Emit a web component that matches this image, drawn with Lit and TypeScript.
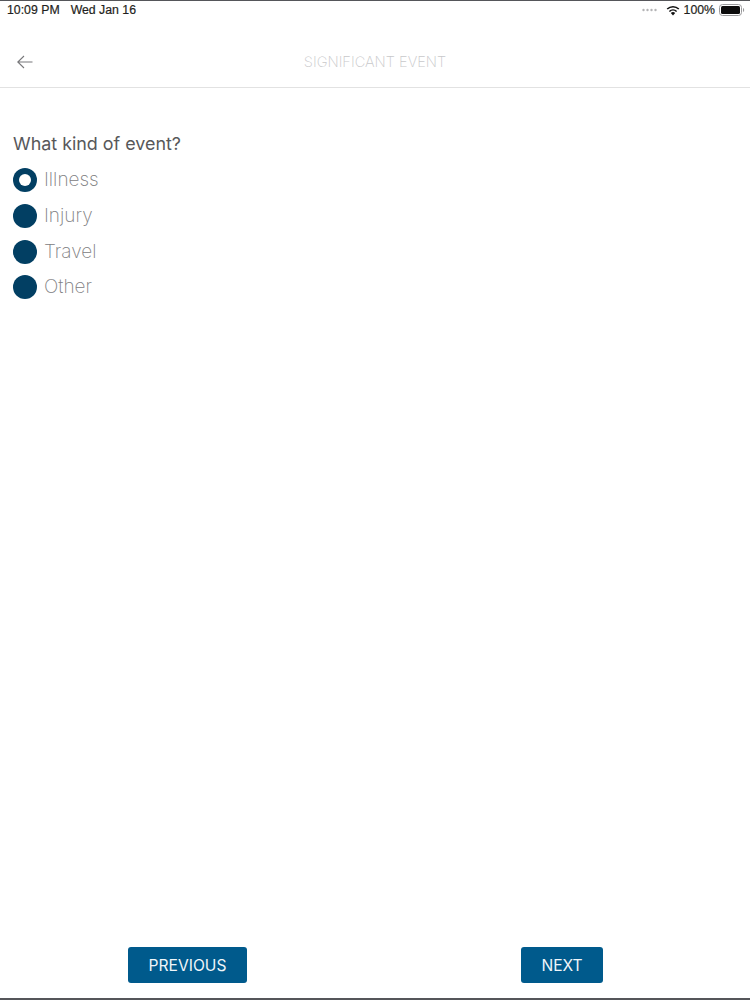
import { LitElement, html, css } from "lit";
import { customElement } from "lit/decorators.js";

const OPTIONS = ["Illness", "Injury", "Travel", "Other"];

@customElement("app-root")
export class AppRoot extends LitElement {
  static styles = css`
    :host {
      display: flex;
      flex-direction: column;
      box-sizing: border-box;
      width: 750px;
      height: 1000px;
      background: #fff;
      border-top: 1px solid #55565a;
      border-bottom: 2px solid #55565a;
      font-family: "Inter", "Liberation Sans", sans-serif;
      overflow: hidden;
    }
    .status {
      display: flex;
      align-items: center;
      justify-content: space-between;
      height: 18px;
      padding: 0 5px 0 7px;
      flex: none;
      font-family: "Liberation Sans", sans-serif;
      font-size: 12.3px;
      color: #1f1f21;
      -webkit-text-stroke: 0.2px #1f1f21;
    }
    .status-left { display: flex; gap: 11px; }
    .status-right { display: flex; align-items: center; gap: 4px; }
    .signal { margin-right: 4px; }
    .header {
      display: grid;
      grid-template-columns: 1fr auto 1fr;
      align-items: center;
      height: 69px;
      flex: none;
      box-sizing: border-box;
      padding: 17px 16px 0;
      border-bottom: 1px solid #e2e2e2;
    }
    .back { display: block; }
    .title {
      font-size: 14.6px;
      font-weight: 200;
      color: #c8c8ca;
      line-height: 18px;
    }
    .content {
      flex: 1;
      padding: 44px 13px 0;
    }
    .question {
      font-size: 17.9px;
      font-weight: 400;
      line-height: 24px;
      color: #58585a;
      margin-bottom: 12px;
    }
    .options { display: flex; flex-direction: column; gap: 11.8px; }
    .option { display: flex; align-items: center; gap: 7px; height: 24px; }
    .radio {
      width: 24px;
      height: 24px;
      border-radius: 50%;
      background: #023f63;
      flex: none;
      display: flex;
      align-items: center;
      justify-content: center;
    }
    .dot { width: 12px; height: 12px; border-radius: 50%; background: #fff; }
    .label {
      font-size: 19px;
      font-weight: 200;
      color: #808082;
      line-height: 24px;
    }
    .footer {
      flex: none;
      display: flex;
      padding: 0 147px 15px 128px;
      justify-content: space-between;
    }
    .btn {
      box-sizing: border-box;
      height: 36px;
      display: flex;
      align-items: center;
      justify-content: center;
      background: #005a8c;
      color: #f0f6fa;
      border: none;
      border-radius: 3px;
      font-family: inherit;
      font-size: 15.6px;
      font-weight: 400;
      padding: 0;
    }
    .prev { width: 119px; }
    .next { width: 82px; }
  `;

  render() {
    return html`
      <div class="status">
        <div class="status-left"><span>10:09 PM</span><span>Wed Jan 16</span></div>
        <div class="status-right">
          <svg class="signal" width="16" height="4" viewBox="0 0 16 4">
            <g fill="#b4b4b6">
              <circle cx="1.5" cy="2" r="1.2"></circle><circle cx="5.5" cy="2" r="1.2"></circle>
              <circle cx="9.5" cy="2" r="1.2"></circle><circle cx="13.5" cy="2" r="1.2"></circle>
            </g>
          </svg>
          <svg width="14" height="11" viewBox="0 0 14 11">
            <path d="M7 10.5 4.8 8A3.2 3.2 0 0 1 9.2 8Z" fill="#111"></path>
            <path d="M3.4 6.5a5.2 5.2 0 0 1 7.2 0" fill="none" stroke="#111" stroke-width="1.6"></path>
            <path d="M1.2 4a8.4 8.4 0 0 1 11.6 0" fill="none" stroke="#111" stroke-width="1.6"></path>
          </svg>
          <span>100%</span>
          <svg width="26" height="12" viewBox="0 0 26 12">
            <rect x="0.5" y="0.5" width="22" height="11" rx="3" fill="none" stroke="#9a9a9c"></rect>
            <rect x="2" y="2" width="19" height="8" rx="1.5" fill="#0c0c0c"></rect>
            <path d="M24 4v4a2 2 0 0 0 1.2-2A2 2 0 0 0 24 4Z" fill="#9a9a9c"></path>
          </svg>
        </div>
      </div>
      <div class="header">
        <svg class="back" width="18" height="14" viewBox="0 0 18 14">
          <path d="M16.5 7H2M8 1 1.8 7 8 13" fill="none" stroke="#77777a" stroke-width="1.1"></path>
        </svg>
        <div class="title">SIGNIFICANT EVENT</div>
        <span></span>
      </div>
      <div class="content">
        <div class="question">What kind of event?</div>
        <div class="options">
          ${OPTIONS.map(
            (o, i) => html`
              <div class="option">
                <span class="radio">${i === 0 ? html`<span class="dot"></span>` : ""}</span>
                <span class="label">${o}</span>
              </div>
            `
          )}
        </div>
      </div>
      <div class="footer">
        <button class="btn prev">PREVIOUS</button>
        <button class="btn next">NEXT</button>
      </div>
    `;
  }
}
